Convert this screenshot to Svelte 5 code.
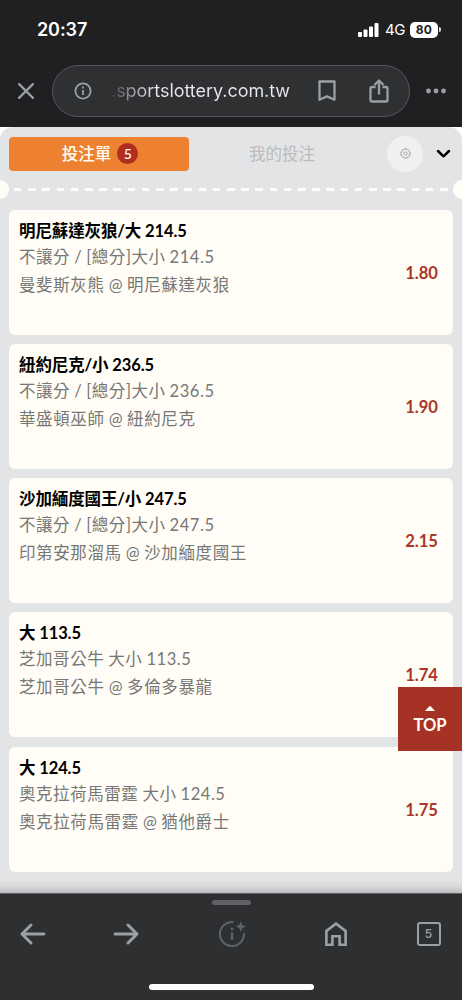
<script>
  const bets = [
    { title: '明尼蘇達灰狼/大 214.5', kind: '不讓分 / [總分]大小 214.5', match: '曼斐斯灰熊 @ 明尼蘇達灰狼', odds: '1.80' },
    { title: '紐約尼克/小 236.5', kind: '不讓分 / [總分]大小 236.5', match: '華盛頓巫師 @ 紐約尼克', odds: '1.90' },
    { title: '沙加緬度國王/小 247.5', kind: '不讓分 / [總分]大小 247.5', match: '印第安那溜馬 @ 沙加緬度國王', odds: '2.15' },
    { title: '大 113.5', kind: '芝加哥公牛 大小 113.5', match: '芝加哥公牛 @ 多倫多暴龍', odds: '1.74' },
    { title: '大 124.5', kind: '奧克拉荷馬雷霆 大小 124.5', match: '奧克拉荷馬雷霆 @ 猶他爵士', odds: '1.75' }
  ];
</script>

<div class="phone">
  <header>
    <div class="status">
      <span class="time">20:37</span>
      <svg class="signal" width="21" height="14" viewBox="0 0 21 14" fill="#fff">
        <rect x="0" y="9" width="4" height="5" rx="1" /><rect x="5.5" y="6.5" width="4" height="7.5" rx="1" />
        <rect x="11" y="3.5" width="4" height="10.5" rx="1" /><rect x="16.5" y="0" width="4" height="14" rx="1" />
      </svg>
      <span class="net">4G</span>
      <span class="battery">80</span>
      <span class="cap"></span>
    </div>
    <div class="address">
      <svg class="close" width="16" height="16" viewBox="0 0 16 16" stroke="#9aa0a6" stroke-width="2.2" stroke-linecap="round"><path d="M1.1 1.1L14.9 14.9M14.9 1.1L1.1 14.9" /></svg>
      <div class="pill">
        <svg width="18" height="18" viewBox="0 0 18 18" fill="none" stroke="#9aa0a6" stroke-width="1.8"><circle cx="9" cy="9" r="7.6" /><path d="M9 8v5M9 4.6v1.8" stroke-width="1.8" /></svg>
        <span class="url">.sportslottery.com.tw</span>
        <svg class="mark" width="18" height="22" viewBox="0 0 18 22" fill="none" stroke="#9aa0a6" stroke-width="2.3" stroke-linejoin="round"><path d="M1.5 1.5h15v18.2L9 16.4l-7.5 3.3z" /></svg>
        <svg class="share" width="20" height="24" viewBox="0 0 20 24" fill="none" stroke="#9aa0a6" stroke-width="2.3" stroke-linejoin="round"><path d="M6.5 8H3.2Q1.5 8 1.5 9.7v11.1q0 1.7 1.7 1.7h13.6q1.7 0 1.7-1.7V9.7Q18.5 8 16.8 8h-3.3M10 15.5V1.5M5.5 6L10 1.5 14.5 6" /></svg>
      </div>
      <svg class="more" width="20" height="6" viewBox="0 0 20 6" fill="#9aa0a6"><circle cx="2.5" cy="3" r="2.4" /><circle cx="10" cy="3" r="2.4" /><circle cx="17.5" cy="3" r="2.4" /></svg>
    </div>
  </header>

  <main>
    <div class="sheet">
      <div class="tabs">
        <div class="tab active">投注單<span class="count">5</span></div>
        <div class="tab idle">我的投注</div>
        <div class="gear">
          <svg width="11" height="11" viewBox="0 0 11 11" fill="none" stroke="#a0a0a0" stroke-width=".9" stroke-linejoin="round"><path d="M4.6.7h1.8l.4 1.2 1.3-.5 1.3 1.3-.5 1.3 1.4.6v1.8l-1.4.5.6 1.3-1.3 1.3-1.3-.6-.5 1.4H4.6l-.5-1.4-1.3.6-1.3-1.3.6-1.3L.7 6.4V4.6l1.4-.6-.6-1.3 1.3-1.3 1.3.5z" /><circle cx="5.5" cy="5.5" r="1.6" /></svg>
        </div>
        <svg class="chev" width="15" height="10" viewBox="0 0 15 10" fill="none" stroke="#000" stroke-width="2.5" stroke-linecap="round" stroke-linejoin="round"><path d="M2 2l5.5 5.3L13 2" /></svg>
      </div>
      <div class="tear">
        <span class="notch left"></span><span class="dashes"></span><span class="notch right"></span>
      </div>
      <div class="list">
        {#each bets as bet}
          <article>
            <div class="info">
              <div class="title">{bet.title}</div>
              <div class="kind">{bet.kind}</div>
              <div class="match">{bet.match}</div>
            </div>
            <div class="odds">{bet.odds}</div>
          </article>
        {/each}
      </div>
    </div>
    <div class="top">
      <svg width="10" height="5" viewBox="0 0 10 5" fill="#fffdf5"><path d="M0 5L4.2.5q.8-.8 1.6 0L10 5z" /></svg>
      <span>TOP</span>
    </div>
  </main>

  <footer>
    <div class="grab"></div>
    <nav>
      <svg width="26" height="22" viewBox="0 0 26 22" fill="none" stroke="#9aa0a6" stroke-width="2.9" stroke-linecap="round" stroke-linejoin="round"><path d="M24 11H2M11 2L2 11l9 9" /></svg>
      <svg width="26" height="22" viewBox="0 0 26 22" fill="none" stroke="#9aa0a6" stroke-width="2.9" stroke-linecap="round" stroke-linejoin="round"><path d="M2 11h22M15 2l9 9-9 9" /></svg>
      <svg width="28" height="28" viewBox="0 0 28 28" fill="none" stroke="#5f6368" stroke-width="2"><path d="M15.5 2.1A12 12 0 1 0 25.9 13" /><path d="M14 12.5v7.5M14 7.8v2.5" stroke-width="2.3" /><path d="M22.8 1.3l1.5 3.8 3.7 1.5-3.7 1.5-1.5 3.8-1.5-3.8-3.7-1.5 3.7-1.5z" fill="#5f6368" stroke="none" /></svg>
      <svg width="22" height="24" viewBox="0 0 22 24" fill="none" stroke="#9aa0a6" stroke-width="2.6"><path d="M1.4 22.7V8.9L11 1.6l9.6 7.3v13.8h-6v-8.5H7.4v8.5z" /></svg>
      <div class="pages">5</div>
    </nav>
    <div class="home"></div>
  </footer>
</div>

<style>
  :global(body) { margin: 0; }
  .phone, .phone * { box-sizing: border-box; }
  .phone { width: 462px; height: 1000px; display: flex; flex-direction: column; overflow: hidden; font-family: Lato, "Noto Sans CJK TC", sans-serif; background: #202023; }
  svg { display: block; flex: none; }
  header { height: 127px; flex: none; background: #202022; font-family: Inter, sans-serif; }
  .status { height: 65px; padding: 0 20px 6px 37px; display: flex; align-items: center; color: #fff; }
  .time { font-size: 18px; font-weight: 600; width: 321px; flex: none; letter-spacing: -.1px; }
  .signal { margin-right: 6px; }
  .net { font-size: 15px; width: 25px; white-space: nowrap; flex: none; letter-spacing: -.4px; }
  .battery { width: 28px; height: 16px; border-radius: 5px; background: #fff; color: #202022; font-size: 12px; line-height: 16px; font-weight: 700; text-align: center; letter-spacing: .2px; flex: none; }
  .cap { width: 2px; height: 5px; margin-left: 1px; border-radius: 0 2px 2px 0; background: #ddd; flex: none; }
  .address { display: flex; align-items: center; height: 52px; padding-left: 18px; }
  .close { margin-right: 18px; }
  .pill { width: 358px; height: 52px; border: 1px solid #55585c; border-radius: 26px; background: #2f3032; display: flex; align-items: center; padding-left: 21px; }
  .url { margin-left: 19px; width: 180px; font-size: 18px; line-height: 26px; letter-spacing: -.05px; white-space: nowrap; color: transparent; background: linear-gradient(90deg, #3b3c3e 0, #77797c 12px, #e8eaed 44px); background-clip: text; -webkit-background-clip: text; }
  .mark { margin-left: 27px; }
  .share { margin-left: 33px; }
  .more { margin-left: 15.5px; }
  main { position: relative; height: 766px; flex: none; background: #fff; }
  .sheet { height: 766px; border-radius: 13px 13px 0 0; background: linear-gradient(#e3e4e6 752px, #dadbdd 759px, #bcbdbf 766px); }
  .tabs { height: 53px; padding: 0 11px 0 9px; display: flex; align-items: center; }
  .tab { font-size: 16.5px; display: flex; align-items: center; justify-content: center; height: 34px; padding-bottom: 1px; }
  .active { width: 180px; border-radius: 4px; background: #ee8130; color: #fffdf5; font-weight: 500; padding-left: 2px; }
  .count { width: 21px; height: 21px; border-radius: 50%; background: #b12d20; margin-left: 6px; font-size: 14px; line-height: 21px; text-align: center; }
  .idle { width: 186px; color: #bbb; }
  .gear { width: 36px; height: 36px; border-radius: 50%; background: #f0f0f0; display: flex; align-items: center; justify-content: center; margin-left: 12px; flex: none; }
  .chev { margin-left: 13px; margin-top: 1px; }
  .tear { height: 20px; display: flex; align-items: center; margin-top: -.5px; }
  .notch { width: 9px; height: 19px; background: #fffdf5; flex: none; }
  .left { border-radius: 0 10px 10px 0; }
  .right { border-radius: 10px 0 0 10px; }
  .dashes { flex: 1; height: 3px; margin: 0 4px 0 5px; background: repeating-linear-gradient(90deg, #fffdf5 0 7.5px, transparent 7.5px 14.2px); }
  .list { padding: 10px 9px 0 9px; display: flex; flex-direction: column; gap: 9.3px; }
  article { height: 125px; background: #fffdf5; border-radius: 6px; padding: 8px 15px 0 10px; display: flex; justify-content: space-between; }
  .info { white-space: nowrap; }
  .title { font-size: 16.5px; line-height: 27px; font-weight: 700; color: #000; letter-spacing: -.12px; }
  .kind, .match { font-size: 16.5px; letter-spacing: .62px; word-spacing: -.8px; color: #777; line-height: 24px; }
  .kind { letter-spacing: .56px; }
  .match { line-height: 33px; }
  .odds { font-size: 16.6px; font-weight: 700; color: #aa3529; line-height: 24px; padding-top: 43px; }
  .top { position: absolute; right: 0; top: 560px; width: 64px; height: 64px; background: #a63125; color: #fffdf5; display: flex; flex-direction: column; align-items: center; padding-top: 19px; font-size: 16.6px; line-height: 24px; font-weight: 700; }
  .top span { margin-top: 2px; }
  footer { height: 107px; flex: none; background: #2e2f31; border-top: 1px solid #626366; display: flex; flex-direction: column; align-items: center; }
  .grab { margin-top: 6px; width: 39px; height: 5px; border-radius: 3px; background: #5f6066; }
  nav { width: 462px; margin-top: 14px; height: 30px; display: grid; grid-template-columns: 66px 120px 91px 117px 69px; align-items: center; justify-items: center; }
  .pages { width: 24px; height: 24px; border: 2.4px solid #9aa0a6; border-radius: 3px; color: #9aa0a6; font: 500 12px/20px Inter, sans-serif; text-align: center; }
  .home { margin-top: 35px; width: 165px; height: 6px; border-radius: 3px; background: #fff; }
</style>
